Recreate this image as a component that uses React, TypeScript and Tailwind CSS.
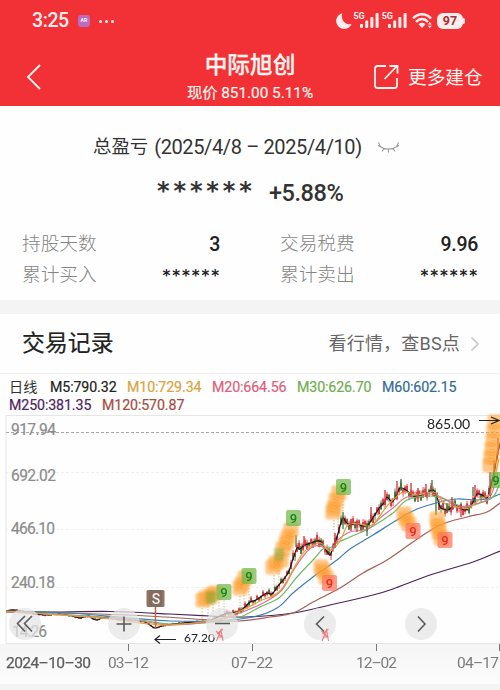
import React from "react";

type Point = [number, number];

interface StatProps {
  label: string;
  value: string;
  masked?: boolean;
}

interface MarkerProps {
  x: number;
  y: number;
  tone: "green" | "red";
}

const averages = [
  { label: "M5:790.32", color: "text-[#222222]", width: "w-[77px]" },
  { label: "M10:729.34", color: "text-[#d9a441]", width: "w-[85px]" },
  { label: "M20:664.56", color: "text-[#dc6079]", width: "w-[85px]" },
  { label: "M30:626.70", color: "text-[#70ad50]", width: "w-[85px]" },
  { label: "M60:602.15", color: "text-[#356a96]", width: "w-[80px]" },
  { label: "M250:381.35", color: "text-[#4f2563]", width: "w-[93px]" },
  { label: "M120:570.87", color: "text-[#a54c43]", width: "w-[90px]" },
];

const priceLine: Point[] = [
  [6, 611], [15, 610], [30, 613], [45, 615], [60, 614], [72, 616], [80, 618], [88, 616],
  [96, 620], [105, 617], [118, 619], [132, 620], [145, 622], [150, 625], [155, 628],
  [162, 626], [172, 624], [183, 623], [196, 622], [208, 621], [218, 617], [228, 613],
  [238, 612], [244, 608], [250, 602], [256, 600], [262, 596], [267, 593], [272, 594],
  [278, 586], [284, 579], [289, 571], [293, 559], [297, 548], [300, 549], [305, 545],
  [311, 543], [317, 541], [321, 542], [325, 548], [330, 555], [333, 547], [337, 537],
  [340, 526], [343, 518], [346, 522], [350, 525], [356, 523], [362, 526], [368, 525],
  [374, 516], [380, 507], [384, 503], [387, 497], [392, 502], [396, 496], [400, 488],
  [406, 490], [413, 496], [420, 495], [427, 493], [433, 490], [437, 497], [440, 507],
  [444, 509], [448, 510], [455, 505], [460, 508], [465, 510], [470, 507], [474, 500],
  [477, 494], [482, 495], [487, 498], [490, 489], [493, 477], [496, 462], [499, 448], [501, 440],
];

const lines: { color: string; points: Point[] }[] = [
  { color: "#151515", points: priceLine },
  {
    color: "#4a2458",
    points: [[6, 611], [60, 612], [110, 611.5], [170, 614], [210, 616], [245, 617], [293, 613], [330, 605], [373, 595], [393, 589], [430, 575], [473, 562], [500, 551]],
  },
  {
    color: "#a35f55",
    points: [[6, 612], [100, 614], [165, 617], [210, 620], [240, 621], [270, 617], [293, 613], [313, 602], [340, 588], [363, 573], [387, 560], [413, 542], [440, 525], [467, 517], [487, 512], [500, 503]],
  },
  {
    color: "#3f7fb5",
    points: [[6, 611], [70, 613], [130, 618], [170, 621], [215, 621], [253, 617], [277, 608], [293, 593], [313, 577], [337, 560], [350, 549], [373, 535], [397, 520], [417, 509], [440, 502], [457, 499], [477, 500], [490, 498], [500, 494]],
  },
  {
    color: "#72b967",
    points: [[6, 612], [90, 616], [140, 620], [170, 624], [215, 622], [240, 617], [260, 607], [280, 597], [297, 577], [313, 560], [323, 549], [330, 548], [337, 543], [350, 537], [370, 528], [393, 513], [407, 500], [430, 496], [447, 500], [463, 507], [480, 503], [493, 497], [499, 485]],
  },
  {
    color: "#df718b",
    points: [[6, 612], [80, 616], [140, 621], [170, 625], [215, 621], [240, 613], [265, 602], [282, 590], [293, 571], [304, 555], [314, 546], [323, 547], [331, 550], [338, 540], [350, 532], [368, 529], [380, 518], [393, 508], [407, 497], [430, 494], [443, 498], [458, 507], [475, 504], [490, 497], [498, 472]],
  },
  {
    color: "#dfa33e",
    points: [[6, 611], [60, 615], [100, 618], [150, 624], [170, 625], [215, 620], [240, 611], [260, 601], [280, 591], [295, 566], [303, 553], [312, 546], [321, 543], [330, 551], [340, 541], [348, 525], [360, 524], [372, 525], [388, 505], [403, 492], [416, 495], [434, 492], [444, 503], [456, 507], [469, 508], [481, 498], [490, 493], [499, 459]],
  },
];

// Overlapping signal badges, drawn as soft orange squares.
const clusters: Point[][] = [
  [[203, 600], [206, 598], [211, 595], [215, 593]],
  [[240, 588], [242, 584], [245, 578]],
  [[273, 567], [276, 563], [281, 560], [283, 549], [286, 543], [288, 537], [291, 530]],
  [[333, 512], [334, 508], [336, 500], [339, 493]],
  [[321, 567], [323, 571], [326, 577]],
  [[404, 514], [406, 519], [409, 524]],
  [[437, 519], [438, 526], [439, 532], [441, 538]],
  [[495, 422], [494, 431], [493, 440], [492, 449], [491, 457], [490, 465]],
];

const stems: [number, number, number][] = [
  [202, 608, 621], [208, 606, 621], [213, 604, 620], [219, 602, 619], [224, 600, 618],
  [240, 596, 610], [244, 592, 608], [249, 585, 604], [274, 575, 590], [279, 570, 588],
  [334, 520, 540], [338, 506, 530], [343, 495, 516],
];

const toPath = (points: Point[]) =>
  points.map(([x, y], i) => `${i === 0 ? "M" : "L"}${x} ${y}`).join(" ");

const toCurve = (points: Point[]) =>
  points
    .map(([x, y], i) => {
      if (i === 0) return `M${x} ${y}`;
      const [px, py] = points[i - 1];
      const before = points[Math.max(0, i - 2)];
      const after = points[Math.min(points.length - 1, i + 1)];
      const c1 = [px + (x - before[0]) / 6, py + (y - before[1]) / 6];
      const c2 = [x - (after[0] - px) / 6, y - (after[1] - py) / 6];
      return `C${c1.join(" ")} ${c2.join(" ")} ${x} ${y}`;
    })
    .join(" ");

const priceAt = (x: number) => {
  const i = Math.max(1, priceLine.findIndex((p) => p[0] >= x));
  const [x0, y0] = priceLine[i - 1];
  const [x1, y1] = priceLine[i];
  return y0 + ((y1 - y0) * (x - x0)) / (x1 - x0);
};

const candles = Array.from({ length: 246 }, (_, i) => {
  const x = 7 + i * 2;
  const noise = Math.sin(i * 12.9898) * 43758.5453;
  const r = noise - Math.floor(noise);
  const size = x < 225 ? 1 : x < 290 ? 3 : 5;
  const y = priceAt(x) + (Math.sin(i * 2.1) * size) / 2;
  return { x, top: y - size * (0.4 + r), bottom: y + size * (1.2 - r * 0.6), body: size * (0.3 + r * 0.5), y, up: (i * 7) % 10 < 7 };
});

function Stat({ label, value, masked }: StatProps) {
  return (
    <div className="flex h-[31px] items-center justify-between">
      <span className="text-[18.7px] font-light text-[#858585]">{label}</span>
      {masked ? (
        <span className="pt-[2px] font-['DejaVu_Sans'] text-[15px] font-bold tracking-[1.9px] -mr-[1px] text-[#222222]">
          {value}
        </span>
      ) : (
        <span className="text-[19.5px] font-medium tracking-[-0.3px] text-[#222222]">{value}</span>
      )}
    </div>
  );
}

function Signal() {
  return (
    <div className="flex items-start">
      <span className="-mt-[3px] text-[9px] font-bold leading-[12px]">5G</span>
      <svg width="20" height="16" viewBox="0 0 20 16" className="-ml-[5px]" fill="currentColor">
        <rect x="0" y="11" width="3" height="4" rx="1" />
        <rect x="5.200" y="7.500" width="3" height="7.500" rx="1" />
        <rect x="10.400" y="4" width="3" height="11" rx="1" />
        <rect x="15.600" y="0" width="3" height="15" rx="1" />
      </svg>
    </div>
  );
}

function StatusBar() {
  return (
    <div className="flex h-[42px] items-center justify-between pl-[32px] pr-[35px] text-[#ffeded]">
      <div className="flex items-center">
        <span className="text-[19.5px] font-medium tracking-[-0.4px]">3:25</span>
        <span className="ml-[9px] flex h-[12px] w-[12px] items-center justify-center rounded-[3px] bg-[#b76fbd] text-[5px] font-bold">
          AR
        </span>
        <span className="ml-[9px] flex gap-[3px]">
          <i className="h-[3px] w-[3px] rounded-full bg-current" />
          <i className="h-[3px] w-[3px] rounded-full bg-current" />
          <i className="h-[3px] w-[3px] rounded-full bg-current" />
        </span>
      </div>
      <div className="flex items-center">
        <svg width="16" height="16" viewBox="0 0 16 16" fill="currentColor">
          <path d="M6.200.2A8 8 0 1 0 15.600 11C10 12.700 4.200 7 6.200.2Z" />
        </svg>
        <div className="ml-[1px] flex gap-[2px]">
          <Signal />
          <Signal />
        </div>
        <svg width="21" height="16" viewBox="0 0 21 16" className="ml-[4px]" fill="none" stroke="currentColor" strokeWidth="2.300">
          <path d="M1 5.500C6-.2 14-.2 19 5.500M4 9c3.500-4 8.500-4 12 0" />
          <path d="M6.500 11.200c2-1.800 5-1.800 7 0L10 15Z" fill="currentColor" stroke="none" />
          <path d="m15.800 11.400 2-2.400 2 2.400ZM15.800 12.800l2 2.400 2-2.400Z" fill="currentColor" stroke="none" />
        </svg>
        <span className="ml-[4px] flex h-[16px] w-[26px] items-center justify-center rounded-[6px] bg-[#ffeded] text-[12.5px] font-bold text-[#a52e37]">
          97
        </span>
        <i className="h-[6px] w-[2px] rounded-r-full bg-[#ffeded]" />
      </div>
    </div>
  );
}

function Header() {
  return (
    <header className="h-[106px] bg-[#f13136] text-[#fff4f0]">
      <StatusBar />
      <div className="grid h-[64px] grid-cols-[150px_200px_150px]">
        <svg width="16" height="28" viewBox="0 0 16 28" className="ml-[26px] mt-[21px]" fill="none" stroke="currentColor" strokeWidth="1.800">
          <path d="M14 2 2 14l12 12" />
        </svg>
        <div className="flex flex-col items-center pt-[10px]">
          <h1 className="text-[22.7px] font-medium leading-[28px] [-webkit-text-stroke:0.3px_currentColor]">中际旭创</h1>
          <p className="mt-[3px] text-[15.3px] leading-[20px] whitespace-nowrap [-webkit-text-stroke:0.2px_currentColor]">现价 851.00 5.11%</p>
        </div>
        <div className="flex items-start pl-[23px] pt-[22px]">
          <svg width="27" height="26" viewBox="0 0 27 26" fill="none" stroke="currentColor" strokeWidth="1.800">
            <path d="M13 2H4.500Q2 2 2 4.500v17Q2 24 4.500 24h17q2.500 0 2.500-2.500V14" />
            <path d="M11.500 15 24 2M16.500 2H24.500V9.500" />
          </svg>
          <span className="ml-[8px] pt-[1px] text-[18.7px] leading-[26px] whitespace-nowrap">更多建仓</span>
        </div>
      </div>
    </header>
  );
}

function Summary() {
  return (
    <section className="h-[194px] px-[22px] pt-[26px]">
      <div className="flex h-[30px] items-center pl-[71px] text-[#333333]">
        <span className="text-[18.4px]">总盈亏</span>
        <span className="ml-[6px] whitespace-pre text-[20px] tracking-[-0.38px]">(2025/4/8 – 2025/4/10)</span>
        <svg width="23" height="12" viewBox="0 0 23 12" className="ml-[15px]" fill="none" stroke="#999999" strokeWidth="1.100">
          <path d="M1 4.500Q11.500 11.500 22 4.500M3.500 6 1.500 1.500M7 7.500 5 10.500M11.500 8v3.500M16 7.500l2 3M19.500 6l2-4.500" />
        </svg>
      </div>
      <div className="flex h-[60px] items-center pl-[135px] text-[#333333]">
        <span className="w-[112px] pb-[3px] font-['DejaVu_Sans'] text-[24px] font-bold tracking-[3.900px]">******</span>
        <span className="pt-[3px] text-[23.5px] font-medium tracking-[-0.45px]">+5.88%</span>
      </div>
      <div className="mt-[7px] grid grid-cols-[198px_198px] justify-between">
        <Stat label="持股天数" value="3" />
        <Stat label="交易税费" value="9.96" />
        <Stat label="累计买入" value="******" masked />
        <Stat label="累计卖出" value="******" masked />
      </div>
    </section>
  );
}

function Marker({ x, y, tone }: MarkerProps) {
  const green = tone === "green";
  return (
    <g>
      <rect x={x - 7.5} y={y - 8} width="15" height="16" rx="2" fill={green ? "#70b849" : "#ff7056"} opacity={green ? 0.72 : 0.7} />
      <text x={Math.min(x, 496)} y={y + 5} textAnchor="middle" fontSize="13" fontWeight="500" fill={green ? "#188518" : "#e32c20"}>
        9
      </text>
    </g>
  );
}

function Chart() {
  return (
    <svg width="500" height="231" viewBox="0 413 500 231" className="block">
      <defs>
        <filter id="soft" x="-30%" y="-30%" width="160%" height="160%">
          <feGaussianBlur stdDeviation="0.9" />
        </filter>
      </defs>
      <path d="M6 415.500H500M6 415.500V643.500H500" fill="none" stroke="#e6e6e6" />
      <path d="M6 472.500H500M6 529.500H500M6 587.500H500" stroke="#f0f0f0" strokeDasharray="3 2" />
      <path d="M6 432.500H500" stroke="#a8a8a8" strokeDasharray="3 2" />
      <g fontSize="15.600" fill="#8c8c8c" stroke="#8c8c8c" strokeWidth="0.200">
        <text x="11" y="435" textLength="45">917.94</text>
        <text x="11" y="480.500" textLength="45">692.02</text>
        <text x="11" y="533.500" textLength="44">466.10</text>
        <text x="11" y="587.500" textLength="44">240.18</text>
        <text x="12" y="637" textLength="35">14.26</text>
      </g>

      {stems.map(([x, y1, y2]) => (
        <path key={x} d={`M${x} ${y1}V${y2}`} stroke="#c9c48f" strokeDasharray="1.500 1.500" />
      ))}
      {candles.map((c) => (
        <g key={c.x} fill={c.up ? "#d93c43" : "#377d3d"}>
          <rect x={c.x - 0.4} y={c.top} width="0.9" height={c.bottom - c.top} />
          <rect x={c.x - 0.9} y={c.y - c.body} width="1.900" height={c.body * 2} />
        </g>
      ))}
      {lines.map((line) => (
        <path key={line.color} d={toCurve(line.points)} fill="none" stroke={line.color} strokeWidth="1.200" />
      ))}
      <path d="M343 512v17M401 479v12M432 480v12M447 503v10M473 487v9M436 497v18M296 535v12M367 523v13" stroke="#377d3d" strokeWidth="1.300" />
      <path d="M304 536v10M335 533v15M351 519v12M357 521v11M371 507v12M385 490v14M397 481v14M411 483v14M418 488v14M426 484v13M452 497v13M461 504v13M475 485v13M490 472v24M494 460v18M498 438v17" stroke="#d93c43" strokeWidth="1.400" />

      <g filter="url(#soft)">
        {clusters.flatMap((cluster, i) =>
          cluster.map(([x, y]) => (
            <rect key={`${i}-${y}`} x={x - 7.5} y={y - 7.5} width="15" height="15" rx="3" fill="#ff9f2e" opacity="0.58" />
          )),
        )}
        <rect x="206" y="591" width="10" height="13" fill="#84a935" opacity="0.6" />
        <rect x="274" y="548" width="10" height="13" fill="#84a935" opacity="0.5" />
      </g>
      {clusters.map((cluster) => (
        <path key={cluster[0].join()} d={toPath(cluster)} stroke="#f08212" strokeWidth="5" strokeDasharray="1 2" fill="none" opacity="0.22" />
      ))}
      <Marker x={224} y={592} tone="green" />
      <Marker x={249} y={576} tone="green" />
      <Marker x={293.5} y={518} tone="green" />
      <Marker x={343.5} y={487} tone="green" />
      <Marker x={498} y={480} tone="green" />
      <Marker x={329.5} y={583} tone="red" />
      <Marker x={413} y={531} tone="red" />
      <Marker x={445} y={540} tone="red" />

      <path d="M155.500 606v22" stroke="#b96c43" strokeWidth="1.500" />
      <rect x="146.500" y="590" width="18" height="17" rx="1.500" fill="#947260" />
      <rect x="149" y="590" width="13" height="17" fill="#806c61" />
      <text x="156" y="603.500" textAnchor="middle" fontSize="14" fontWeight="500" fill="#f8eeea">S</text>
      <path d="M176 639.500H155M160 635.500l-5 4 5 4" fill="none" stroke="#222222" strokeWidth="1.200" />
      <text x="184" y="642" fontSize="12" textLength="31" fill="#222222" fontFamily="Lato">67.20</text>
      <path d="M479 420.500H498M491 417l8 3.500-8 3.500" fill="none" stroke="#222222" strokeWidth="1.200" />
      <text x="427" y="429" fontSize="14" textLength="43" fill="#222222" fontFamily="Lato">865.00</text>

      <g fill="#e4e4e4" fillOpacity="0.72">
        {[25, 124, 222, 320, 421].map((cx) => (
          <circle key={cx} cx={cx} cy="624" r="16" />
        ))}
      </g>
      <g fill="none" stroke="#5a5a5a" strokeWidth="1.600">
        <path d="m25 616-7.500 7.500 7.500 8M32 616l-7.500 7.500 7.500 8" />
        <path d="M116.500 624h15M124 616.500v15" />
        <path d="M215 623.500h15" />
        <path d="m324 616.500-7.500 7.500 7.500 7.500" />
        <path d="m418 616.500 7 7.500-7 7.500" />
      </g>
      <g fill="none" stroke="#ea7d82" strokeWidth="1.100">
        <path d="m216.500 641 4.500-11 2 11M218 637h5M216 631l7 7M223 629l-6 5" />
        <path d="m322 641 4.500-11 2 11M323.500 637h5M321.500 631l7 7M328.500 629l-6 5" />
      </g>
    </svg>
  );
}

function DateAxis() {
  return (
    <div className="h-[41px] border-b border-[#f4f4f4] bg-gradient-to-b from-[#f5f5f5] to-[#fcfcfc]">
      <svg width="500" height="40" viewBox="0 644 500 40" className="block" fontSize="15.500" fill="#7c7c7c">
        <path d="M128.500 644v7M252.500 644v7M376.500 644v7M499.500 644v7" stroke="#777777" />
        <text x="6" y="668" textLength="85" fill="#5c5c5c" stroke="#5c5c5c" strokeWidth="0.250">2024–10–30</text>
        <text x="108" y="668" textLength="41">03–12</text>
        <text x="231" y="668" textLength="42">07–22</text>
        <text x="356" y="668" textLength="41">12–02</text>
        <text x="457" y="668" textLength="42">04–17</text>
      </svg>
    </div>
  );
}

export default function App() {
  return (
    <main className="h-[690px] w-[500px] overflow-hidden bg-[#fefefe] font-['Roboto','Noto_Sans_CJK_SC',sans-serif]">
      <Header />
      <Summary />
      <div className="h-[14px] bg-[#f4f4f4]" />
      <section>
        <div className="flex h-[60px] items-center justify-between border-b border-[#f1f1f1] pl-[22px] pr-[20px]">
          <h2 className="pt-[1px] text-[22.9px] text-[#222222] [-webkit-text-stroke:0.2px_currentColor]">交易记录</h2>
          <div className="flex items-center text-[#666666]">
            <span className="text-[18px] tracking-[0.2px]">看行情，查BS点</span>
            <svg width="10" height="16" viewBox="0 0 10 16" className="ml-[10px]" fill="none" stroke="#c8c8c8" strokeWidth="1.700">
              <path d="m1.500 1.500 6.500 6.500-6.500 6.500" />
            </svg>
          </div>
        </div>
        <div className="flex h-[39px] flex-wrap content-start pl-[9px] pt-[4px] text-[14.200px] leading-[18px]">
          <span className="w-[41px] text-[#333333]">日线</span>
          {averages.map((average) => (
            <span key={average.label} className={`${average.width} ${average.color} whitespace-nowrap tracking-[-0.1px] [-webkit-text-stroke:0.2px_currentColor]`}>
              {average.label}
            </span>
          ))}
        </div>
        <Chart />
        <DateAxis />
      </section>
      <div className="h-[5px] bg-[#f4f4f4]" />
    </main>
  );
}
